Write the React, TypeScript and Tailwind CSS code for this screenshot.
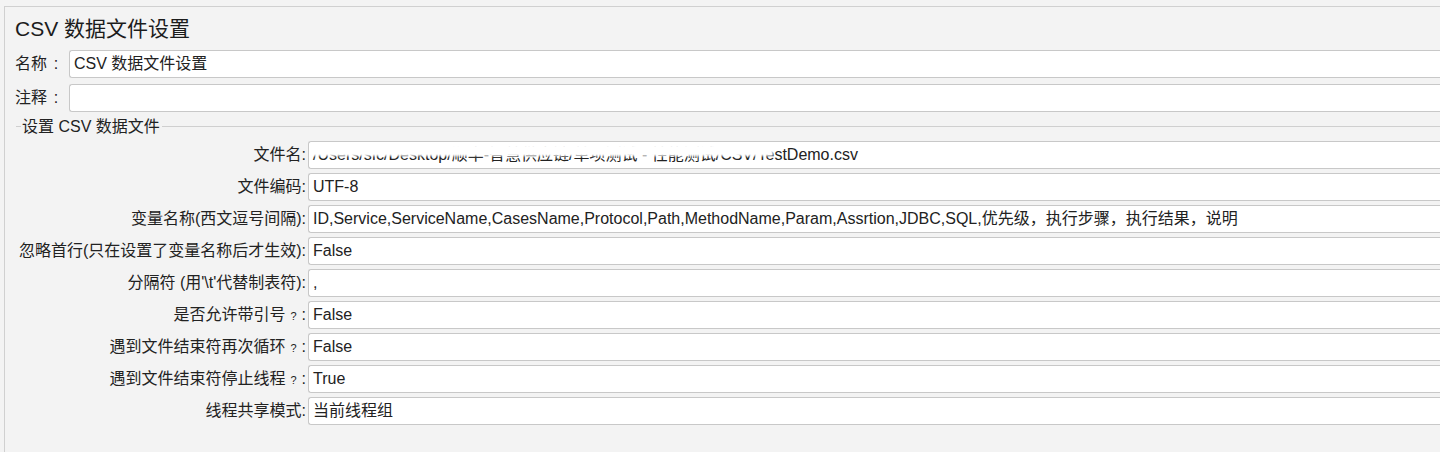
const Q = () => (
  <span className="inline-block w-[16px] text-center text-[11px]">?</span>
);

const rows: { label: React.ReactNode; value: string }[] = [
  { label: "文件编码:", value: "UTF-8" },
  {
    label: "变量名称(西文逗号间隔):",
    value:
      "ID,Service,ServiceName,CasesName,Protocol,Path,MethodName,Param,Assrtion,JDBC,SQL,优先级，执行步骤，执行结果，说明",
  },
  { label: "忽略首行(只在设置了变量名称后才生效):", value: "False" },
  { label: "分隔符 (用'\\t'代替制表符):", value: "," },
  { label: <>是否允许带引号<Q />:</>, value: "False" },
  { label: <>遇到文件结束符再次循环<Q />:</>, value: "False" },
  { label: <>遇到文件结束符停止线程<Q />:</>, value: "True" },
  { label: "线程共享模式:", value: "当前线程组" },
];

function Field({ children }: { children?: React.ReactNode }) {
  return (
    <div className="relative flex h-[28px] flex-1 items-center whitespace-nowrap rounded-l-[3px] border border-r-0 border-[#c8c8c8] bg-white pl-[4px]">
      {children}
    </div>
  );
}

export default function App() {
  return (
    <div className="h-[452px] w-[1440px] overflow-hidden bg-[#f3f3f3] pt-[6px] font-['Liberation_Sans','Noto_Sans_CJK_SC',sans-serif] text-[16px] text-[#222]">
      <div className="ml-[4px] h-full border-l border-t border-[#d0d0d0] pl-[10px]">
        {/* Title */}
        <div className="flex h-[43px] items-center text-[21px] text-[#1c1c1c]">
          CSV 数据文件设置
        </div>

        {/* Name / comment */}
        <div className="flex h-[28px] items-center">
          <span className="w-[54px]">
            名称<span className="inline-block w-[18px] text-center">:</span>
          </span>
          <Field>CSV 数据文件设置</Field>
        </div>
        <div className="mt-[6px] flex h-[28px] items-center">
          <span className="w-[54px]">
            注释<span className="inline-block w-[18px] text-center">:</span>
          </span>
          <Field />
        </div>

        {/* Fieldset legend */}
        <div className="flex h-[29px] items-center">
          <div className="ml-[1px] w-[5px] border-t border-[#cfcfcf]" />
          <span className="px-[1px]">设置 CSV 数据文件</span>
          <div className="ml-[1px] flex-1 border-t border-[#cfcfcf]" />
        </div>

        {/* Settings rows */}
        <div className="-ml-[10px] flex flex-col gap-[4px]">
          <div className="flex h-[28px] items-center">
            <span className="w-[303px] pr-[2px] text-right">文件名:</span>
            <Field>
              <span>/Users/sfc/Desktop/顺丰-智慧供应链/单项测试 - 性能测试/CSV/TestDemo.csv</span>
              <div className="absolute left-[2px] top-[3px] h-[11px] w-[462px] bg-white blur-[1px]" />
            </Field>
          </div>
          {rows.map((r, i) => (
            <div key={i} className="flex h-[28px] items-center">
              <span className="w-[303px] whitespace-nowrap pr-[2px] text-right">{r.label}</span>
              <Field>{r.value}</Field>
            </div>
          ))}
        </div>
      </div>
    </div>
  );
}
